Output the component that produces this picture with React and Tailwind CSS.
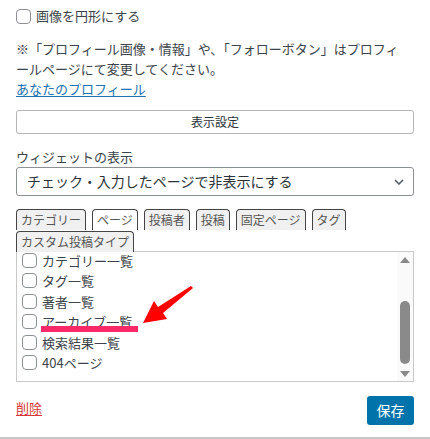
import React from "react";

const font = { fontFamily: '"Noto Sans CJK JP", "Noto Sans", sans-serif' };

function Box({ className = "" }) {
  return (
    <span
      className={`inline-block w-[15px] h-[15px] shrink-0 rounded-[4px] border border-[#8c8f94] bg-white ${className}`}
    />
  );
}

const tabs = [
  { t: "カテゴリー", active: false },
  { t: "ページ", active: true },
  { t: "投稿者", active: false },
  { t: "投稿", active: false },
  { t: "固定ページ", active: false },
  { t: "タグ", active: false },
  { t: "カスタム投稿タイプ", active: false },
];

const items = ["カテゴリー一覧", "タグ一覧", "著者一覧", "アーカイブ一覧", "検索結果一覧", "404ページ"];

export default function App() {
  return (
    <div className="relative w-[430px] h-[439px] bg-white text-[#3c434a] overflow-hidden" style={font}>
      <div className="px-4">
        {/* checkbox row */}
        <div className="flex items-center gap-[5px] h-[20px] mt-[6px] text-[13px] leading-[20px]">
          <Box />
          <span>画像を円形にする</span>
        </div>

        {/* note */}
        <div className="mt-[13px] text-[13px] leading-[20px]">
          <div>※「プロフィール画像・情報」や、「フォローボタン」はプロフィ</div>
          <div>ールページにて変更してください。</div>
          <div>
            <span className="text-[#2271b1] underline underline-offset-2">あなたのプロフィール</span>
          </div>
        </div>

        {/* display settings button */}
        <div className="mt-[11px] h-[24px] rounded-[3px] border border-[#b5b5b5] bg-white flex items-center justify-center text-[12px] text-[#2c3338]">
          表示設定
        </div>

        {/* widget display */}
        <div className="mt-[13px] text-[13px] leading-[20px]">ウィジェットの表示</div>
        <div className="h-[29px] rounded-[3px] border border-[#8c8f94] flex items-center justify-between pl-[10px] pr-[8px] text-[14px] text-[#2c3338]">
          <span>チェック・入力したページで非表示にする</span>
          <svg width="10" height="6" viewBox="0 0 10 6" className="mr-[1px]">
            <path d="M1 1 L5 5 L9 1" fill="none" stroke="#50575e" strokeWidth="1.5" />
          </svg>
        </div>

        {/* tabs */}
        <div className="mt-[13px] flex flex-wrap gap-x-[6px] gap-y-[1px]">
          {tabs.map((tab) => (
            <div
              key={tab.t}
              className={`h-[21px] px-1 rounded-t-[4px] border border-b-0 border-[#444] text-[12px] leading-[20px] text-[#555] ${
                tab.active ? "bg-white" : "bg-[#f0f0f0]"
              }`}
            >
              {tab.t}
            </div>
          ))}
        </div>

        {/* list */}
        <div className="h-[131px] -mt-[1px] border border-[#c9c9c9] flex overflow-hidden">
          <div className="flex-1 pl-[5px] -mt-[2px]">
            {items.map((it) => (
              <div key={it} className="h-[20.5px] flex items-center gap-[5px] text-[13px]">
                <Box />
                <span className="relative">
                  {it}
                  {it === "アーカイブ一覧" && (
                    <span className="absolute left-[-1px] right-[-6px] top-[14px] h-[6px] bg-[#fa2a6a]" />
                  )}
                </span>
              </div>
            ))}
          </div>
          <div className="w-[16px] bg-[#fafafa] flex flex-col items-center pt-[5px] pb-[4px]">
            <svg width="10" height="6" viewBox="0 0 10 6">
              <path d="M0 6 L5 0 L10 6 Z" fill="#8a8a8a" />
            </svg>
            <div className="flex-1" />
            <div className="w-[10px] h-[63px] rounded-[5px] bg-[#8a8a8a]" />
            <div className="h-[7px]" />
            <svg width="10" height="6" viewBox="0 0 10 6">
              <path d="M0 0 L10 0 L5 6 Z" fill="#8a8a8a" />
            </svg>
          </div>
        </div>

        {/* footer */}
        <div className="mt-[14px] flex items-start justify-between">
          <span className="mt-[2px] text-[13px] leading-[20px] text-[#d63638] underline underline-offset-2">削除</span>
          <div className="w-[47px] h-[29px] rounded-[3px] bg-[#0073aa] text-white text-[14px] flex items-center justify-center">
            保存
          </div>
        </div>
      </div>

      <div className="absolute left-0 right-0 top-[437px] h-[2px] bg-[#c8c8c8]" />

      {/* red arrow */}
      <svg className="absolute left-0 top-0 pointer-events-none" width="430" height="439">
        <polygon
          points="143,323 154,301 158,307 191,286 193,288 163,313 167,319"
          fill="#ff0000"
        />
      </svg>
    </div>
  );
}
